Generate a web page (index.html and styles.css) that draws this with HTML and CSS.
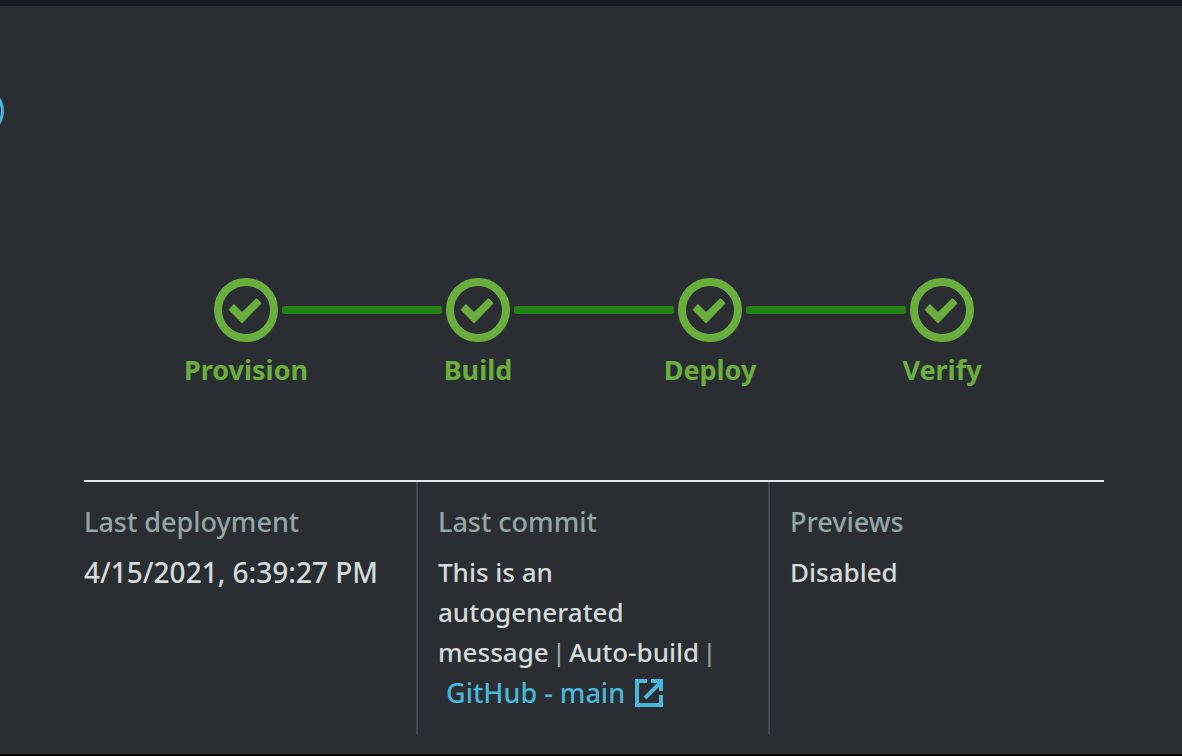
FILE: index.html
```html
<!DOCTYPE html>
<html lang="en">
<head>
<meta charset="utf-8">
<title>Deployment status</title>
<link rel="stylesheet" href="styles.css">
</head>
<body>
<svg class="sprite" aria-hidden="true">
  <symbol id="check" viewBox="0 0 64 64">
    <circle cx="32" cy="32" r="28" fill="none" stroke="currentColor" stroke-width="8"/>
    <path d="M14.500 31.500L20 26L28 34L42.500 20L47.700 25.200L28 45.500Z" fill="currentColor"/>
  </symbol>
</svg>
<main class="panel">
  <span class="ring" aria-hidden="true"></span>
  <ol class="steps">
    <li class="step"><span class="track"><svg class="check"><use href="#check"/></svg></span><span class="name">Provision</span></li>
    <li class="step"><span class="track"><svg class="check"><use href="#check"/></svg></span><span class="name">Build</span></li>
    <li class="step"><span class="track"><svg class="check"><use href="#check"/></svg></span><span class="name">Deploy</span></li>
    <li class="step"><span class="track"><svg class="check"><use href="#check"/></svg></span><span class="name">Verify</span></li>
  </ol>
  <dl class="details">
    <div class="detail">
      <dt class="label">Last deployment</dt>
      <dd class="value date">4/15/2021, 6:39:27 PM</dd>
    </div>
    <div class="detail">
      <dt class="label">Last commit</dt>
      <dd class="value">This is an<br>autogenerated<br>message <span class="bar">|</span> Auto-build <span class="bar">|</span>
        <a class="source" href="#">GitHub - main
          <svg class="external" viewBox="0 0 28 28" aria-hidden="true"><path d="M12 2H2V26H26V16M16 2H26V12M10 19L25 4" fill="none" stroke="currentColor" stroke-width="4"/></svg></a>
      </dd>
    </div>
    <div class="detail">
      <dt class="label">Previews</dt>
      <dd class="value">Disabled</dd>
    </div>
  </dl>
</main>
</body>
</html>
```
FILE: styles.css
```css
* {
  box-sizing: border-box;
}

body {
  margin: 0;
  min-height: 100vh;
  display: flex;
  flex-direction: column;
  border-top: 6px solid #161922;
  border-bottom: 2px solid #030306;
  background: #2a2e33;
  color: #d5dbdb;
  font: 500 26px/40px "Noto Sans", "Open Sans", sans-serif;
}

.sprite {
  position: absolute;
  width: 0;
  height: 0;
}

.panel {
  position: relative;
  flex: 1;
  padding: 272px 78px 20px 84px;
  overflow: hidden;
}

.ring {
  position: absolute;
  top: 81px;
  left: -44px;
  width: 48px;
  height: 48px;
  border: 4px solid #48b7d9;
  border-radius: 50%;
  border-right-width: 3px;
}

.steps {
  display: flex;
  margin: 0;
  padding: 0 46px;
  list-style: none;
  color: #6aaf3d;
  font-size: 27px;
  font-weight: 700;
}

.step {
  flex: 1;
  display: flex;
  flex-direction: column;
  align-items: center;
  gap: 8px;
}

.track {
  display: flex;
  align-items: center;
  gap: 4px;
  width: 100%;
}

.track::before,
.track::after {
  content: "";
  flex: 1;
  height: 8px;
  background: #238215;
}

.track::before {
  border-radius: 0 2px 2px 0;
}

.track::after {
  border-radius: 2px 0 0 2px;
}

.step:first-child .track::before,
.step:last-child .track::after {
  background: none;
}

.check {
  width: 64px;
  height: 64px;
}

.details {
  display: grid;
  grid-template-columns: 332fr 352fr 336fr;
  margin: 90px 0 0;
  border-top: 2px solid #e3e6ea;
}

.detail {
  padding: 20px 20px 20px 0;
}

.detail + .detail {
  padding-left: 20px;
  border-left: 2px solid #42474f;
}

.label {
  margin-bottom: 10px;
  color: #95a5a6;
  font-size: 27px;
}

.value {
  margin: 0;
}

.date {
  font-size: 28px;
}

.bar {
  color: #95a5a6;
  font: 400 26px/1 "Liberation Sans", Arial, sans-serif;
}

.source {
  display: flex;
  align-items: center;
  gap: 10px;
  padding: 1px 0 1px 8px;
  color: #48b7d9;
  font-size: 27px;
  text-decoration: none;
}

.external {
  width: 28px;
  height: 28px;
}
```
